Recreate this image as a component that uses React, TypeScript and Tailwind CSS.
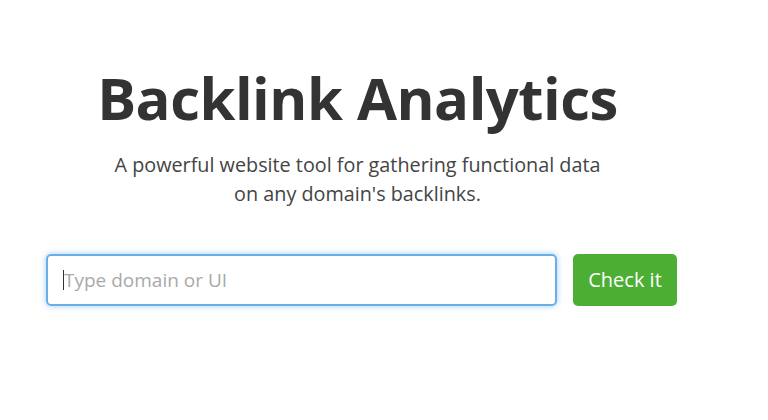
import React from 'react';

const App: React.FC = () => {
  return (
    <div className="w-[768px] h-[420px] bg-white overflow-hidden" style={{ fontFamily: '"Open Sans", "Noto Sans", sans-serif' }}>
      <div className="ml-[46px] w-[631px] pt-[62px] flex flex-col items-center">
        <h1 className="text-[58px] leading-[72px] font-bold text-[#333333] tracking-[-0.5px] -ml-[8px]">Backlink Analytics</h1>
        <p className="mt-[16px] text-[19.8px] leading-[29px] text-[#444444] text-center -ml-[8px]">
          A powerful website tool for gathering functional data
          <br />
          on any domain's backlinks.
        </p>
        <div className="mt-[46px] w-full flex gap-[16px]">
          <div className="flex-1 h-[52px] rounded-[5px] border-2 border-[#66afe9] shadow-[0_0_6px_rgba(102,175,233,0.6)] flex items-center pl-[15px] overflow-hidden">
            <span className="w-px h-[20px] bg-[#333333]" />
            <span className="text-[19px] text-[#a9a9a9] whitespace-nowrap">Type domain or UI</span>
          </div>
          <button className="w-[104px] h-[52px] rounded-[5px] bg-[#4cae33] text-white text-[20px]">Check it</button>
        </div>
      </div>
    </div>
  );
};

export default App;
